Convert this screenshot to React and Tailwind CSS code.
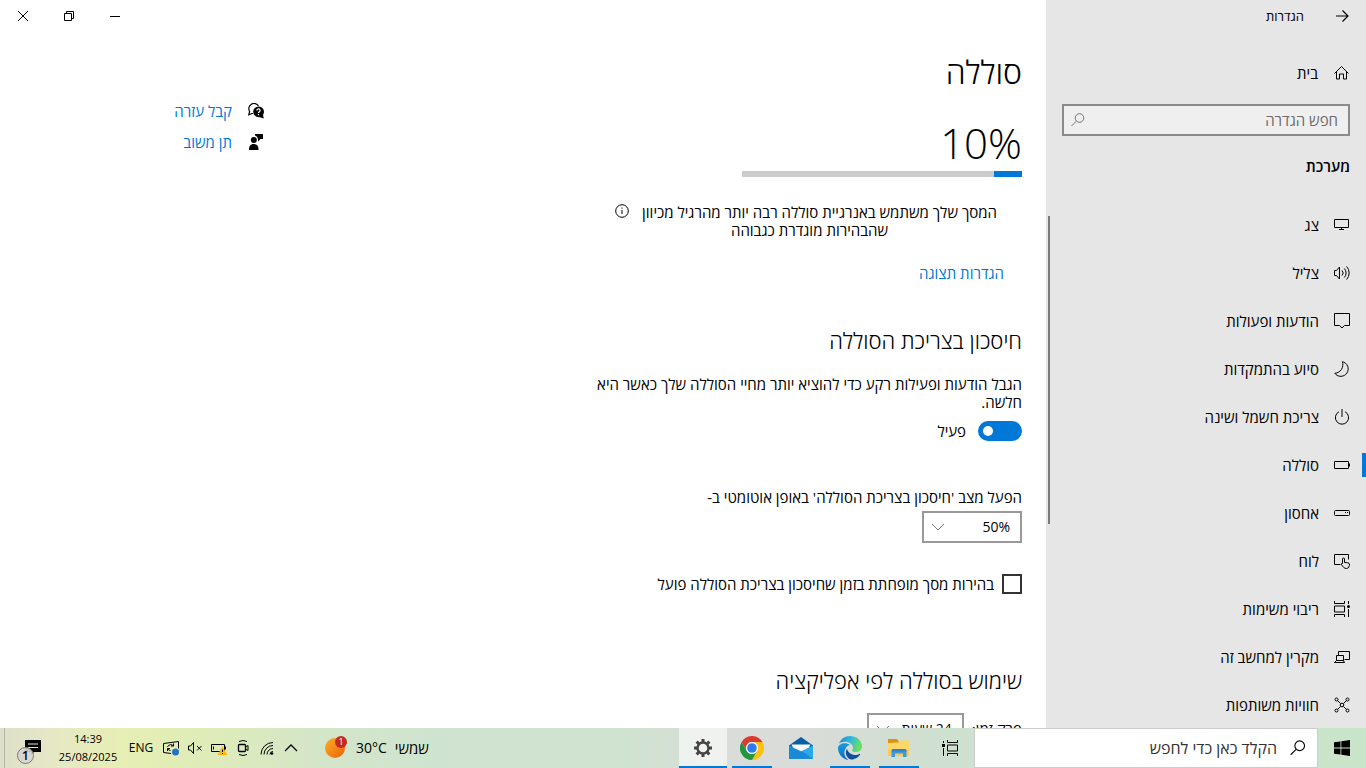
import React, { useState } from 'react';

const navItems = [
  { id: 'display', label: 'צג' },
  { id: 'sound', label: 'צליל' },
  { id: 'notifications', label: 'הודעות ופעולות' },
  { id: 'focus', label: 'סיוע בהתמקדות' },
  { id: 'power', label: 'צריכת חשמל ושינה' },
  { id: 'battery', label: 'סוללה' },
  { id: 'storage', label: 'אחסון' },
  { id: 'tablet', label: 'לוח' },
  { id: 'multitasking', label: 'ריבוי משימות' },
  { id: 'projecting', label: 'מקרין למחשב זה' },
  { id: 'shared', label: 'חוויות משותפות' },
];

const iconShapes = {
  home: <path d="M.5 8.5l7-7 7 7M2.500 6.5v7.500h3V9h4v5h3V6.500" />,
  display: <path d="M.5 2.500h14v8H.5zM7.500 10.500v2M5 12.500h5" />,
  sound: (
    <path d="M.5 5.500h2l3-3.500v12l-3-3.500h-2zM8 5.500a3.500 3.500 0 0 1 0 5M10.300 3.500a6.500 6.500 0 0 1 0 9M12.600 1.500a9.500 9.500 0 0 1 0 13" />
  ),
  notifications: <path d="M.5.5h15v12h-5L8 15l-2.500-2.500h-5z" />,
  focus: <path d="M8.300.7A7.400 7.400 0 1 1 .8 12.300 8.600 8.600 0 0 0 8.300.7z" />,
  power: <path d="M8 0v8M5 2.700a6.600 6.600 0 1 0 6 0" />,
  battery: <path d="M.5 4.500h14v7H.5zM15.500 6.500v3" />,
  storage: (
    <>
      <rect x=".5" y="5.5" width="15" height="5" rx="1" />
      <path d="M11 7.500h1M13 7.500h1" />
    </>
  ),
  tablet: (
    <path d="M6.500 11.500h-6v-10h14v5M8.500 10.500V6a1 1 0 0 1 2 0v3.500c2 0 5 .3 5 1.500 0 2-.7 4.500-3 4.500S9 14 7.500 11.500c-.4-1 .3-1.400 1-1" />
  ),
  multitasking: (
    <>
      <path d="M.5 0v2.500h10V0M.5 5h10v6H.5zM.5 16v-2.500h10V16M14.500 0v3M14.500 8v8" />
      <circle cx="14.5" cy="5.5" r="1.5" fill="currentColor" stroke="none" />
    </>
  ),
  projecting: <path d="M4.500 6V2.500h11v8h-5M2.500 6.500h7v5h-7zM.5 13.500h10l-1-2h-7z" />,
  shared: (
    <>
      <path d="m3.500 3.500 3 3M12.500 3.500l-3 3M3.500 12.500l3-3M12.500 12.500l-3-3" />
      <circle cx="8" cy="8" r="1.8" />
      <circle cx="2.5" cy="2.5" r="1.5" />
      <circle cx="13.5" cy="2.5" r="1.5" />
      <circle cx="2.5" cy="13.5" r="1.5" />
      <circle cx="13.5" cy="13.5" r="1.5" />
    </>
  ),
  back: <path d="M2 8h12M8.500 2.500 14 8l-5.500 5.500" strokeWidth="1.2" />,
  search: (
    <>
      <circle cx="9.5" cy="6" r="4.3" />
      <path d="m6.300 9.200-4.800 4.800" />
    </>
  ),
  chevronDown: <path d="m2 5 6 6 6-6" />,
  info: (
    <>
      <circle cx="8" cy="8" r="6.3" />
      <path d="M8 7v4M8 4.500v1.200" />
    </>
  ),
  close: <path d="m3 3 10 10M13 3 3 13" />,
  restore: <path d="M3.500 5.500h7v7h-7zM5.500 5V3.500h7v7H11" />,
  minimize: <path d="M3 8.500h10" />,
};

function Icon({ name, className = 'size-4' }) {
  return (
    <svg
      viewBox="0 0 16 16"
      fill="none"
      stroke="currentColor"
      className={`shrink-0 ${className}`}
      aria-hidden="true"
    >
      {iconShapes[name]}
    </svg>
  );
}

function Sidebar() {
  const [active, setActive] = useState('battery');

  return (
    <aside className="flex w-80 shrink-0 flex-col bg-[#e6e6e6]">
      <div className="flex h-8 shrink-0 items-center gap-[30px] pr-4 text-[13px]">
        <button type="button" aria-label="הקודם">
          <Icon name="back" />
        </button>
        <span>הגדרות</span>
      </div>

      <a href="#home" className="mt-[17px] flex h-12 shrink-0 items-center gap-4 pr-4">
        <Icon name="home" />
        בית
      </a>

      <label className="mx-4 mt-[7px] flex h-8 shrink-0 items-center border-2 border-[#8a8a8a] bg-[#efefef] px-[10px]">
        <input
          type="text"
          aria-label="חפש הגדרה"
          placeholder="חפש הגדרה"
          className="min-w-0 flex-1 bg-transparent outline-none placeholder:text-[#6b6b6b]"
        />
        <Icon name="search" className="-ml-1 size-4 text-[#777]" />
      </label>

      <h2 className="mt-[21px] mb-[26px] shrink-0 pr-4 font-semibold">מערכת</h2>

      <div className="flex min-h-0 flex-1">
        <nav className="min-h-0 flex-1 overflow-hidden">
          {navItems.map((item) => (
            <a
              key={item.id}
              href={`#${item.id}`}
              onClick={() => setActive(item.id)}
              className="flex h-12 items-center"
            >
              <span className={item.id === active ? 'h-6 w-1 bg-[#0078d7]' : 'h-6 w-1'} />
              <span className="flex items-center gap-[15px] pr-3">
                <Icon name={item.id} />
                {item.label}
              </span>
            </a>
          ))}
        </nav>
        <div className="mt-[15px] ml-[2px] h-[308px] w-[2px] bg-[#7a7a7a]" />
      </div>
    </aside>
  );
}

function WindowControls() {
  return (
    <div className="flex h-8 shrink-0 justify-end">
      {[
        ['minimize', 'מזער'],
        ['restore', 'שחזר'],
        ['close', 'סגור'],
      ].map(([name, label]) => (
        <button
          key={name}
          type="button"
          aria-label={label}
          className="flex w-[46px] items-center justify-center"
        >
          <Icon name={name} />
        </button>
      ))}
    </div>
  );
}

function Select({ id, options, className }) {
  return (
    <div className={`relative ${className}`}>
      <select
        id={id}
        className="h-8 w-full appearance-none border-2 border-[#999] bg-white pr-[10px] pl-7 text-sm"
      >
        {options.map((option) => (
          <option key={option}>{option}</option>
        ))}
      </select>
      <Icon
        name="chevronDown"
        className="pointer-events-none absolute top-2 left-2 size-4 text-[#777]"
      />
    </div>
  );
}

function BatteryPage({ level }) {
  const [saver, setSaver] = useState(true);

  return (
    <div className="w-[434px] shrink-0">
      <h1 className="mt-5 text-[32px] leading-10 font-light">סוללה</h1>

      <div dir="ltr" className="mt-6 text-right text-[42px] leading-[54px] font-light">
        {level}%
      </div>
      <div className="mt-px h-[6px] w-[280px] bg-[#ccc]">
        <div className="h-full bg-[#0078d7]" style={{ width: `${level}%` }} />
      </div>

      <div className="mt-[26px] flex">
        <p className="pr-[25px] text-center">
          המסך שלך משתמש באנרגיית סוללה רבה יותר מהרגיל מכיוון
          <span className="block pr-5">שהבהירות מוגדרת כגבוהה</span>
        </p>
        <Icon name="info" className="mr-3 size-4" />
      </div>
      <a href="#display" className="mt-[25px] mr-[18px] block w-fit text-[#0078d7]">
        הגדרות תצוגה
      </a>

      <h2 className="mt-11 text-[22px] leading-7 font-light">חיסכון בצריכת הסוללה</h2>
      <p className="mt-[21px]">
        הגבל הודעות ופעילות רקע כדי להוציא יותר מחיי הסוללה שלך כאשר היא חלשה.
      </p>
      <label className="mt-[10px] flex w-fit items-center gap-3">
        <input
          type="checkbox"
          role="switch"
          checked={saver}
          onChange={(e) => setSaver(e.target.checked)}
          className="flex h-5 w-11 appearance-none items-center rounded-full bg-[#999] px-[5px] before:size-[10px] before:rounded-full before:bg-white checked:justify-end checked:bg-[#0078d7]"
        />
        {saver ? 'פעיל' : 'כבוי'}
      </label>

      <label htmlFor="threshold" className="mt-[47px] mb-[5px] block">
        הפעל מצב 'חיסכון בצריכת הסוללה' באופן אוטומטי ב-
      </label>
      <Select id="threshold" options={['50%', '40%', '30%', '20%', '10%']} className="w-[100px]" />

      <label className="mt-[31px] flex w-fit items-center gap-2">
        <input type="checkbox" className="size-5 appearance-none border-2 border-[#333]" />
        בהירות מסך מופחתת בזמן שחיסכון בצריכת הסוללה פועל
      </label>

      <h2 className="mt-[72px] text-[22px] leading-7 font-light">שימוש בסוללה לפי אפליקציה</h2>
      <div className="mt-[19px] flex items-center gap-2">
        <label htmlFor="period">פרק זמן:</label>
        <Select id="period" options={['24 שעות', 'שבוע']} className="w-[97px]" />
      </div>
    </div>
  );
}

function HelpLinks() {
  return (
    <div className="w-[264px] shrink-0 pt-[63px] text-[#0078d7]">
      <a href="#help" className="flex h-[31px] items-center gap-4">
        <svg viewBox="0 0 16 16" className="size-4 text-black" aria-hidden="true">
          <path
            d="M10.500 3A5.200 5.200 0 1 0 1.600 8.400L.8 11.800l3.200-1.300h1"
            fill="none"
            stroke="currentColor"
            strokeWidth="1.2"
          />
          <circle cx="10.600" cy="8.800" r="5.400" fill="currentColor" />
          <path d="m11 14 4.800 1.500-1-4.500z" fill="currentColor" />
          <path
            d="M8.900 7.500a1.600 1.600 0 1 1 2.300 1.400c-.6.300-.7.500-.7 1M10.500 11v1.200"
            fill="none"
            stroke="#fff"
            strokeWidth="1.2"
          />
        </svg>
        קבל עזרה
      </a>
      <a href="#feedback" className="flex h-[31px] items-center gap-4">
        <svg viewBox="0 0 16 16" className="size-4 text-black" fill="currentColor" aria-hidden="true">
          <circle cx="5.800" cy="6" r="3" />
          <path d="M1 16c0-4 1.500-6 4.800-6s4.800 2 4.800 6zM7 0h8v5h-2.500L10 7.500V5a4.500 4.500 0 0 0-3-3.500z" />
        </svg>
        תן משוב
      </a>
    </div>
  );
}

function TaskbarButton({ label, underline, active, children }) {
  return (
    <button
      type="button"
      aria-label={label}
      className={
        active
          ? 'flex w-12 flex-col items-center bg-white/60'
          : 'flex w-12 flex-col items-center'
      }
    >
      <span className="flex flex-1 items-center pt-[2px]">{children}</span>
      <span
        className={
          active
            ? 'h-[2px] w-full bg-[#0078d7]'
            : underline
              ? 'h-[2px] w-10 bg-[#0078d7]'
              : 'h-[2px] w-10'
        }
      />
    </button>
  );
}

function ExplorerLogo() {
  return (
    <svg viewBox="0 0 24 24" className="size-6" aria-hidden="true">
      <path d="M1 3h9l2 2.500V9H1z" fill="#d9960a" />
      <path d="M1 7l10-.5 1.500-2H22V20H1z" fill="#ffd567" />
      <path d="M1 14h21v6H1z" fill="#fcc94e" />
      <path d="M4.500 21v-6q0-2 2-2h11q2 0 2 2v6H16v-3.500H8V21z" fill="#3f97dc" />
      <path d="M4.500 15q0-2 2-2h11q2 0 2 2v.5h-15z" fill="#2c82cc" />
    </svg>
  );
}

function EdgeLogo() {
  return (
    <svg viewBox="0 0 24 24" className="size-6" aria-hidden="true">
      <defs>
        <linearGradient id="edge-top" x1="0" y1="0" x2="1" y2="0.3">
          <stop offset="0" stopColor="#1587d8" />
          <stop offset="0.5" stopColor="#2fb6df" />
          <stop offset="1" stopColor="#6bde62" />
        </linearGradient>
        <linearGradient id="edge-left" x1="0" y1="0" x2="0.3" y2="1">
          <stop offset="0" stopColor="#1ca0e0" />
          <stop offset="1" stopColor="#0c6bc8" />
        </linearGradient>
      </defs>
      <path
        d="M21.860 17.860q.14 0 .25.12.1.13.1.25t-.11.33l-.32.46-.43.53-.44.5q-.26.25-.38.37l-.22.23q-.58.53-1.340 1.040-.76.51-1.600.91-.86.4-1.740.64t-1.670.24q-.9 0-1.690-.28-.8-.28-1.480-.78-.68-.5-1.220-1.170-.53-.66-.92-1.440-.38-.77-.58-1.600-.2-.83-.2-1.670 0-1 .32-1.960.33-.97.87-1.800.14.95.55 1.770.41.82 1.020 1.500.6.68 1.380 1.210.78.54 1.640.9.86.36 1.770.56.92.2 1.800.2 1.120 0 2.180-.24 1.060-.23 2.060-.72l.2-.1.2-.05z"
        fill="#114f9b"
      />
      <path
        d="M6.360 16.590q0 1.100.27 2.150.27 1.060.78 2.030.51.96 1.240 1.770.74.82 1.660 1.400-1.470-.2-2.800-.74-1.330-.55-2.480-1.370-1.150-.83-2.080-1.900-.92-1.070-1.580-2.330T.36 14.940Q0 13.540 0 12.060q0-.81.32-1.490.31-.68.83-1.230.53-.55 1.200-.96.66-.4 1.350-.66.74-.27 1.500-.39.78-.12 1.550-.12.7 0 1.420.1.72.12 1.400.35.68.23 1.320.57.63.35 1.160.83-.35 0-.7.07-.33.07-.65.23v-.02q-.63.28-1.200.74-.57.46-1.050 1.040-.48.58-.87 1.260-.38.67-.65 1.390-.27.71-.42 1.440-.15.72-.15 1.380z"
        fill="url(#edge-left)"
      />
      <path
        d="M11.960.06q1.700 0 3.330.39 1.630.38 3.070 1.150 1.430.77 2.620 1.930 1.180 1.160 1.980 2.700.49.94.76 1.960.28 1 .28 2.080 0 .89-.23 1.700-.24.8-.69 1.480-.45.68-1.100 1.220-.64.53-1.450.88-.54.24-1.110.36-.58.13-1.160.13-.42 0-.97-.03-.54-.03-1.100-.12-.55-.1-1.050-.28-.5-.19-.84-.5-.12-.09-.23-.24-.1-.16-.1-.33 0-.15.16-.35.16-.2.35-.5.2-.28.36-.68.16-.4.16-.95 0-1.060-.4-1.960-.4-.91-1.060-1.640-.66-.74-1.520-1.280-.86-.55-1.790-.89-.84-.3-1.720-.44-.87-.14-1.760-.14-1.550 0-3.060.45T.94 7.550q.71-1.740 1.810-3.130 1.100-1.380 2.520-2.350Q6.680 1.100 8.370.58q1.700-.52 3.580-.52Z"
        fill="url(#edge-top)"
      />
    </svg>
  );
}

function MailLogo() {
  return (
    <svg viewBox="0 0 24 24" className="size-6" aria-hidden="true">
      <path d="M0 9.500 12 1l12 8.500v4H0z" fill="#0a5ea8" />
      <path d="M0 9.500 12 15l12-5.500V23H0z" fill="#2aa9e6" />
      <path d="M0 9.500 13.500 15.500 24 23H0z" fill="#1b8ad6" />
      <path d="M2.500 8.500h19l-1.500 3-8 3.700-8-3.700z" fill="#f4f8fb" />
    </svg>
  );
}

function ChromeLogo() {
  return (
    <svg viewBox="0 0 24 24" className="size-6" aria-hidden="true">
      <path d="M1.600 6A12 12 0 0 1 22.400 6H12a6 6 0 0 0-5.200 9z" fill="#dd3b2f" />
      <path d="M22.400 6A12 12 0 0 1 12 24l5.200-9A6 6 0 0 0 12 6z" fill="#fdc20f" />
      <path d="M12 24A12 12 0 0 1 1.600 6l5.200 9a6 6 0 0 0 10.400 0z" fill="#24963f" />
      <circle cx="12" cy="12" r="6" fill="#fff" />
      <circle cx="12" cy="12" r="4.800" fill="#2e7bf0" />
    </svg>
  );
}

function GearIcon() {
  return (
    <svg
      viewBox="0 0 20 20"
      className="size-5 text-[#444]"
      fill="none"
      stroke="currentColor"
      aria-hidden="true"
    >
      <circle cx="10" cy="10" r="5.5" strokeWidth="2.4" />
      <path
        d="M10 1v3M10 16v3M1 10h3M16 10h3M3.600 3.600l2.200 2.200M14.200 14.200l2.200 2.200M3.600 16.400l2.200-2.200M14.200 5.800l2.200-2.200"
        strokeWidth="3"
      />
    </svg>
  );
}

function TrayIcon({ label, children }) {
  return (
    <button type="button" aria-label={label} className="flex w-6 items-center justify-center">
      <svg
        viewBox="0 0 18 16"
        className="h-4 w-[18px]"
        fill="none"
        stroke="currentColor"
        aria-hidden="true"
      >
        {children}
      </svg>
    </button>
  );
}

function Tray() {
  return (
    <>
      <TrayIcon label="הצג סמלים מוסתרים">
        <path d="m3 11 6-6 6 6" strokeWidth="1.3" />
      </TrayIcon>
      <TrayIcon label="רשת">
        <path d="M3 14.500A12 12 0 0 1 15 2.500M6 14.500a9 9 0 0 1 9-9M9 14.500a6 6 0 0 1 6-6" />
        <path d="M12 14.500a3 3 0 0 1 3-3" />
        <circle cx="14" cy="13.500" r="1.300" fill="currentColor" stroke="none" />
      </TrayIcon>
      <TrayIcon label="היפגש כעת">
        <path d="M5 1.500q4-2 8 0M5 14.500q4 2 8 0" />
        <rect x="4.5" y="4.500" width="7" height="7" rx="1" strokeWidth="1.3" />
        <path d="m11.500 7 2.500-1.500v5L11.500 9" />
      </TrayIcon>
      <TrayIcon label="סוללה">
        <path d="M1.500 4.500h13v7h-13zM15.500 6.500v3M3.500 6.500v3" />
        <path d="m12.500 6.500 5 8.500h-10z" fill="#fdb813" stroke="none" />
        <path d="M12.500 9.500v2.500M12.500 13v1" />
      </TrayIcon>
      <TrayIcon label="רמקולים">
        <path d="M2.500 6h2l3-3.500v11l-3-3.500h-2zM11 6l4.500 4.500M15.500 6 11 10.500" />
      </TrayIcon>
      <TrayIcon label="עדכונים">
        <path d="M9 13.500l-7.500-1v-9l15-2v7" />
        <path d="M5.500 7a3.500 3.500 0 0 1 6-1M11.500 3.500V6H9M5.500 11V8.500H8M5.500 8.500a3.500 3.500 0 0 0 3 2" />
        <circle cx="13.500" cy="12" r="3.500" fill="#2b6fc4" stroke="none" />
      </TrayIcon>
    </>
  );
}

function Taskbar() {
  return (
    <footer className="flex h-10 shrink-0 bg-[linear-gradient(90deg,#dedfcb_0%,#e6e8c4_4%,#e6efb4_9%,#dfecb8_15%,#d4e6c8_23%,#cfe4d0_32%,#d0e2d0_46%,#dbdcda_55%,#d8dcd7_61%,#cfe0d0_68%,#cde3cd_85%,#c9e5c9_100%)]">
      <button type="button" aria-label="התחל" className="flex w-12 items-center justify-center">
        <svg viewBox="0 0 16 16" className="size-4" fill="currentColor" aria-hidden="true">
          <path d="M0 2.300l6.500-.9v6.200H0zM7.300 1.300L16 0v7.600H7.300zM0 8.400h6.500v6.200L0 13.700zM7.300 8.400H16V16l-8.700-1.300z" />
        </svg>
      </button>
      <label className="flex w-[344px] items-center gap-3 border border-[#ccc] bg-white px-[10px]">
        <Icon name="search" className="size-[18px]" />
        <input
          type="text"
          aria-label="הקלד כאן כדי לחפש"
          placeholder="הקלד כאן כדי לחפש"
          className="min-w-0 flex-1 bg-transparent text-base outline-none placeholder:text-[#333]"
        />
      </label>

      <div className="flex gap-[3px]">
        <TaskbarButton label="תצוגת משימות">
          <svg
            viewBox="0 0 16 16"
            className="size-4"
            fill="none"
            stroke="currentColor"
            aria-hidden="true"
          >
            <path d="M5.500 0v2.500h10V0M5.500 5h10v6h-10zM5.500 16v-2.500h10V16M1.500 1v2M1.500 8v8" />
            <path d="M0 4h3v3H0z" fill="currentColor" stroke="none" />
          </svg>
        </TaskbarButton>
        <div className="flex gap-px">
          <TaskbarButton label="סייר הקבצים" underline>
            <ExplorerLogo />
          </TaskbarButton>
          <TaskbarButton label="Microsoft Edge" underline>
            <EdgeLogo />
          </TaskbarButton>
          <TaskbarButton label="דואר">
            <MailLogo />
          </TaskbarButton>
          <TaskbarButton label="Google Chrome" underline>
            <ChromeLogo />
          </TaskbarButton>
          <TaskbarButton label="הגדרות" active>
            <GearIcon />
          </TaskbarButton>
        </div>
      </div>

      <div className="flex-1" />

      <button type="button" className="ml-[21px] flex items-center gap-2">
        <span>שמשי</span>
        <span dir="ltr" className="text-sm">
          30°C
        </span>
        <svg viewBox="0 0 24 24" className="size-6" aria-hidden="true">
          <defs>
            <linearGradient id="sun" x1="0" y1="0" x2="1" y2="1">
              <stop offset="0" stopColor="#fbb024" />
              <stop offset="1" stopColor="#ee5f0c" />
            </linearGradient>
          </defs>
          <circle cx="11" cy="12" r="10" fill="url(#sun)" />
          <circle cx="17" cy="6" r="6" fill="#c42b1c" />
          <text x="17" y="9" textAnchor="middle" fontSize="9" fill="#fff">
            1
          </text>
        </svg>
      </button>

      <Tray />

      <button type="button" className="w-9 text-xs">
        ENG
      </button>
      <button
        type="button"
        dir="ltr"
        className="flex w-[70px] flex-col items-center justify-center text-[11px] leading-[18px]"
      >
        <span>14:39</span>
        <span>25/08/2025</span>
      </button>
      <button
        type="button"
        aria-label="מרכז הפעולות"
        className="flex w-[49px] items-center justify-center border-l border-[#b5b5a5] pt-2"
      >
        <svg viewBox="0 0 24 26" className="h-[26px] w-6" aria-hidden="true">
          <path d="M8 1h16v12h-7l-3 3v-3H8z" />
          <path d="M11 5h10M11 8.500h10" stroke="#e6e8c4" />
          <circle cx="8.500" cy="16.500" r="8" fill="#d6d6d0" fillOpacity=".9" stroke="#777" />
          <text x="8.500" y="21" textAnchor="middle" fontSize="12" fontWeight="600">
            1
          </text>
        </svg>
      </button>
      <div className="w-1" />
    </footer>
  );
}

function App() {
  return (
    <div
      dir="rtl"
      lang="he"
      className="flex h-screen flex-col overflow-hidden bg-white font-['Open_Sans','Noto_Sans',sans-serif] text-[15px] leading-[18px] text-black"
    >
      <div className="flex min-h-0 flex-1">
        <Sidebar />
        <main className="flex min-w-0 flex-1 flex-col overflow-hidden">
          <WindowControls />
          <div className="flex min-h-0 flex-1 justify-between overflow-hidden pr-6">
            <BatteryPage level={10} />
            <HelpLinks />
          </div>
        </main>
      </div>
      <Taskbar />
    </div>
  );
}

export default App;
